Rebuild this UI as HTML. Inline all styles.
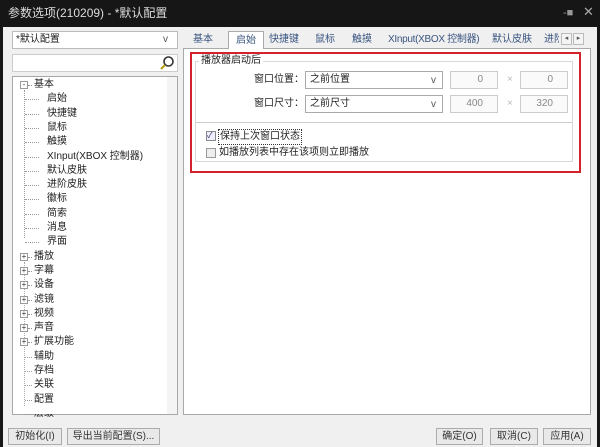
<!DOCTYPE html>
<html><head><meta charset="utf-8"><style>
*{margin:0;padding:0;box-sizing:border-box}
body{width:600px;height:447px;background:#161616;font-family:"Liberation Sans","Microsoft YaHei","Noto Sans CJK SC",sans-serif;font-size:10px;color:#222;position:relative;overflow:hidden}
.a{position:absolute}
.main{left:3px;top:27px;width:594px;height:420px;background:#f0f0f0}
.box{background:#fff;border:1px solid #a8a8a8}
.t{position:absolute;white-space:nowrap;line-height:14px}
.btn{position:absolute;top:428px;height:17px;border:1px solid #acacac;background:#e9e9e9;text-align:center;line-height:15px;font-size:10px;color:#333}
.pm{position:absolute;width:8px;height:8px;border:1px solid #999;background:#fff;font-size:8px;line-height:6px;text-align:center;color:#333}
.hl{position:absolute;height:0;border-top:1px dotted #999}
.spin{background:#fafafa;border:1px solid #ccc;color:#888;text-align:right;padding-right:14px;line-height:16px}
.tab{color:#3a5580}
</style></head><body>
<div class="t" style="left:8px;top:6px;color:#ddd;font-size:12px">参数选项(210209) - *默认配置</div>
<div class="t" style="left:563px;top:6px;color:#999;font-size:11px">-■</div>
<div class="t" style="left:583px;top:5px;color:#aaa;font-size:13px">✕</div>
<div class="a main"></div>
<!-- left -->
<div class="a box" style="left:12px;top:31px;width:166px;height:18px;border-color:#bbb"></div>
<div class="t" style="left:16px;top:33px">*默认配置</div>
<div class="t" style="left:163px;top:33px;color:#555">v</div>
<div class="a box" style="left:12px;top:54px;width:166px;height:18px;border-color:#ccc"></div>
<svg class="a" style="left:159px;top:55px" width="16" height="16"><circle cx="9.5" cy="6.5" r="4.5" fill="none" stroke="#333" stroke-width="1.6"/><line x1="6" y1="10" x2="2" y2="14" stroke="#b8a020" stroke-width="2.2"/></svg>
<div class="a box" style="left:12px;top:76px;width:166px;height:339px"></div>
<div class="a" style="left:167px;top:77px;width:10px;height:337px;background:#f4f4f4"></div>
<div class="a" style="left:24px;top:90px;height:148px;border-left:1px dotted #999"></div>
<div class="a" style="left:24px;top:262px;height:150px;border-left:1px dotted #aaa"></div>
<div id="tree"></div>
<!-- right -->
<div class="a box" style="left:183px;top:48px;width:408px;height:367px;border-color:#aaa"></div>
<div class="a" style="left:228px;top:31px;width:36px;height:18px;background:#fff;border:1px solid #aaa;border-bottom:none"></div>
<div class="t tab" style="left:193px;top:33px">基本</div>
<div class="t tab" style="left:236px;top:34px">启始</div>
<div class="t tab" style="left:269px;top:33px">快捷键</div>
<div class="t tab" style="left:315px;top:33px">鼠标</div>
<div class="t tab" style="left:352px;top:33px">触摸</div>
<div class="t tab" style="left:388px;top:33px;letter-spacing:-0.3px">XInput(XBOX 控制器)</div>
<div class="t tab" style="left:492px;top:33px">默认皮肤</div>
<div class="t tab" style="left:544px;top:33px;width:15px;overflow:hidden">进阶</div>
<div class="a" style="left:561px;top:33px;width:11px;height:12px;border:1px solid #bbb;background:#f4f4f4;font-size:7px;text-align:center;line-height:10px;color:#555">◂</div>
<div class="a" style="left:573px;top:33px;width:11px;height:12px;border:1px solid #bbb;background:#f4f4f4;font-size:7px;text-align:center;line-height:10px;color:#555">▸</div>
<div class="a" style="left:190px;top:52px;width:391px;height:121px;border:2px solid #d2232a"></div>
<div class="a" style="left:195px;top:61px;width:378px;height:101px;border:1px solid #d8d8d8"></div>
<div class="t" style="left:199px;top:54px;background:#fff;padding:0 2px">播放器启动后</div>
<div class="t" style="left:254px;top:73px">窗口位置：</div>
<div class="a box" style="left:305px;top:71px;width:138px;height:18px;border-color:#aaa"></div>
<div class="t" style="left:310px;top:73px">之前位置</div>
<div class="t" style="left:431px;top:74px;color:#555;font-size:10px">v</div>
<div class="a spin" style="left:450px;top:71px;width:48px;height:18px">0</div>
<div class="t" style="left:507px;top:73px;color:#bbb">×</div>
<div class="a spin" style="left:520px;top:71px;width:48px;height:18px">0</div>
<div class="t" style="left:254px;top:97px">窗口尺寸：</div>
<div class="a box" style="left:305px;top:95px;width:138px;height:18px;border-color:#aaa"></div>
<div class="t" style="left:310px;top:97px">之前尺寸</div>
<div class="t" style="left:431px;top:98px;color:#555;font-size:10px">v</div>
<div class="a spin" style="left:450px;top:95px;width:48px;height:18px">400</div>
<div class="t" style="left:507px;top:97px;color:#bbb">×</div>
<div class="a spin" style="left:520px;top:95px;width:48px;height:18px">320</div>
<div class="a" style="left:196px;top:122px;width:376px;border-top:1px solid #ccc"></div>
<div class="a" style="left:206px;top:131px;width:10px;height:10px;border:1px solid #888;background:#eef;font-size:8px;line-height:8px;color:#335">✓</div>
<div class="t" style="left:218px;top:129px;border:1px dotted #333;padding:0 1px">保持上次窗口状态</div>
<div class="a" style="left:206px;top:148px;width:10px;height:10px;border:1px solid #999;background:#eee"></div>
<div class="t" style="left:219px;top:146px">如播放列表中存在该项则立即播放</div>
<!-- buttons -->
<div class="btn" style="left:8px;width:54px">初始化(I)</div>
<div class="btn" style="left:67px;width:93px">导出当前配置(S)...</div>
<div class="btn" style="left:436px;width:47px">确定(O)</div>
<div class="btn" style="left:490px;width:48px">取消(C)</div>
<div class="btn" style="left:543px;width:48px">应用(A)</div>
<div class="a" style="left:13px;top:406px;width:154px;height:8px;background:#fff;overflow:hidden"></div>
<script>
var items=[["基本",0,1,"-"],["启始",1],["快捷键",1],["鼠标",1],["触摸",1],["XInput(XBOX 控制器)",1],["默认皮肤",1],["进阶皮肤",1],["徽标",1],["简索",1],["消息",1],["界面",1],["播放",0,1],["字幕",0,1],["设备",0,1],["滤镜",0,1],["视频",0,1],["声音",0,1],["扩展功能",0,1],["辅助",0],["存档",0],["关联",0],["配置",0],["层级",0]];
var h="";
items.forEach(function(it,i){var y=78+i*14.3;
 if(it[1]){h+='<div class="hl" style="left:25px;top:'+(y+7)+'px;width:14px"></div><div class="t" style="left:47px;top:'+y+'px">'+it[0]+'</div>';}
 else{ if(it[2]) h+='<div class="pm" style="left:20px;top:'+(y+3)+'px">'+(it[3]||'+')+'</div><div class="hl" style="left:28px;top:'+(y+7)+'px;width:4px"></div>';
 else h+='<div class="hl" style="left:25px;top:'+(y+7)+'px;width:7px"></div>';
 h+='<div class="t" style="left:34px;top:'+y+'px">'+it[0]+'</div>';}
});
document.getElementById("tree").innerHTML=h;
</script>
</body></html>
